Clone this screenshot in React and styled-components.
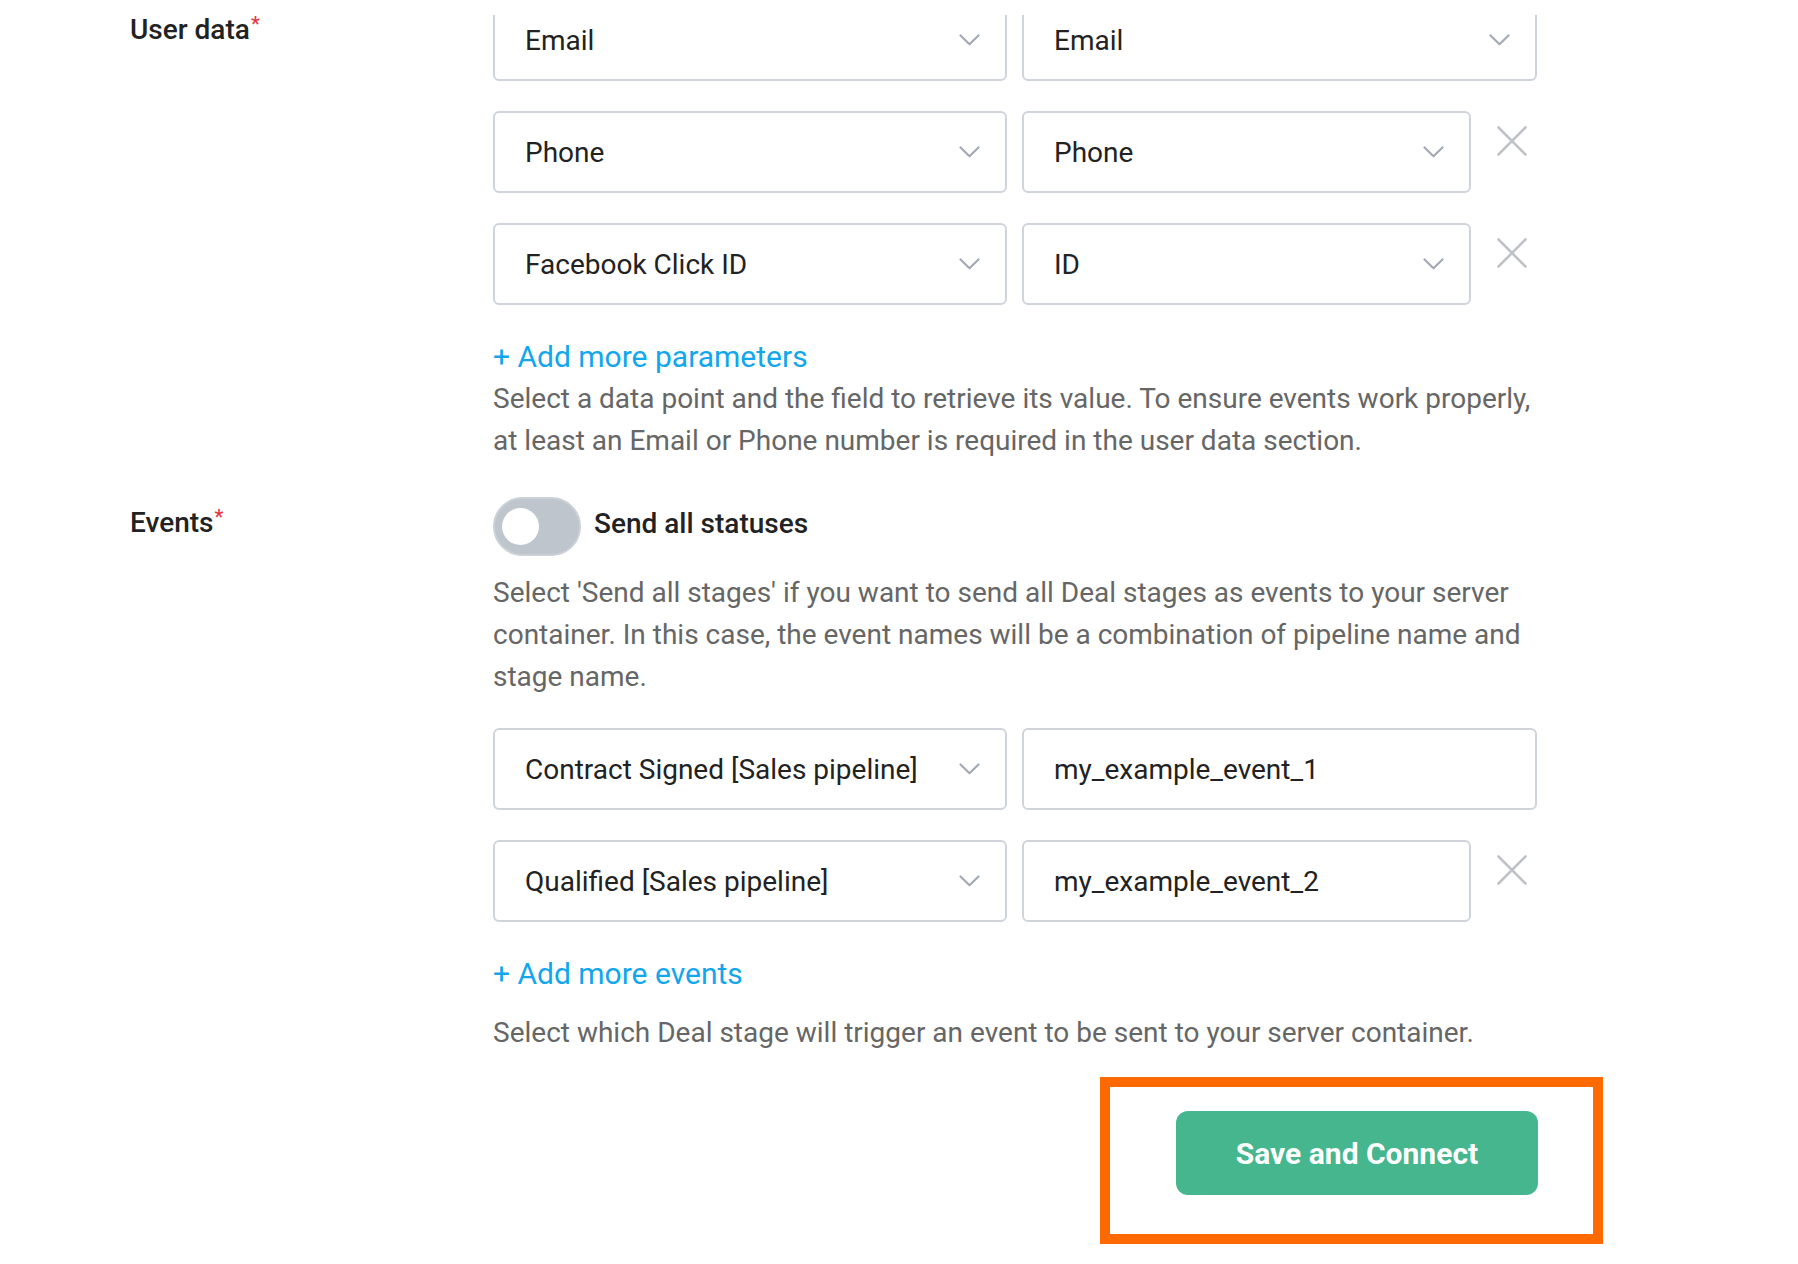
import React from "react";
import styled, { createGlobalStyle } from "styled-components";

const GlobalStyle = createGlobalStyle`
  html, body { margin: 0; padding: 0; background: #ffffff; }
  body { font-family: Roboto, "Liberation Sans", Arial, sans-serif; color: #222; }
  * { box-sizing: border-box; }
`;

const TopFade = styled.div`
  position: fixed;
  top: 0;
  left: 0;
  right: 0;
  height: 15px;
  background: #ffffff;
  z-index: 5;
`;

const Page = styled.div`
  width: 1798px;
  height: 1264px;
  overflow: hidden;
  padding-left: 130px;
  padding-top: 0;
  margin-top: -1px;
`;

const Section = styled.section`
  display: grid;
  grid-template-columns: 363px 1044px;
  margin-bottom: ${(p) => p.$mb || 0}px;
`;

const Label = styled.div`
  font-size: 28px;
  font-weight: 500;
  color: #222;
  line-height: 32px;
  padding-top: ${(p) => p.$pt}px;
`;

const Star = styled.sup`
  color: #e53946;
  font-size: 20px;
  vertical-align: top;
  position: relative;
  top: -6px;
  margin-left: 1px;
`;

const Controls = styled.div`
  display: flex;
  flex-direction: column;
`;

const Row = styled.div`
  display: flex;
  align-items: flex-start;
  gap: 15px;
  margin-bottom: 30px;
`;

const Field = styled.div`
  flex: ${(p) => (p.$first ? "0 0 514px" : "1 1 auto")};
  height: 82px;
  border: 2px solid #cfd4db;
  border-radius: 6px;
  background: #fff;
  display: flex;
  align-items: center;
  padding: 0 25px 0 30px;
  font-size: 28px;
  color: #222;
  min-width: 0;
`;

const FieldText = styled.span`
  flex: 1;
  white-space: nowrap;
  overflow: hidden;
`;

const RemoveBtn = styled.button`
  flex: 0 0 51px;
  height: 50px;
  margin-top: 5px;
  border: none;
  background: transparent;
  padding: 0;
  display: flex;
  align-items: center;
  justify-content: center;
  cursor: pointer;
`;

const AddLink = styled.a`
  font-size: 30px;
  line-height: 42px;
  color: #12a6ec;
  text-decoration: none;
  margin-top: 1px;
  align-self: flex-start;
  cursor: pointer;
`;

const Help = styled.p`
  margin: ${(p) => p.$mt || 0}px 0 0 0;
  font-size: 28px;
  line-height: 42px;
  color: #666;
`;

const ToggleRow = styled.div`
  display: flex;
  align-items: center;
  gap: 13px;
  margin-bottom: 16px;
`;

const Toggle = styled.div`
  width: 88px;
  height: 59px;
  border-radius: 30px;
  background: #bfc5cd;
  border: 2px solid #ccd1d8;
  display: flex;
  align-items: center;
  padding-left: 7px;
  flex: 0 0 auto;
`;

const Knob = styled.div`
  width: 37px;
  height: 37px;
  border-radius: 50%;
  background: #fff;
`;

const ToggleLabel = styled.span`
  font-size: 28px;
  font-weight: 500;
  color: #222;
  margin-bottom: 7px;
`;

const Spacer = styled.div`
  height: ${(p) => p.$h}px;
`;

const Footer = styled.div`
  display: flex;
  justify-content: flex-end;
  width: 1408px;
  margin-top: 57px;
`;

const Highlight = styled.div`
  position: relative;
`;

const HighlightFrame = styled.div`
  position: absolute;
  top: -34px;
  bottom: -49px;
  left: -76px;
  right: -65px;
  border: 10px solid #ff6a00;
  pointer-events: none;
`;

const PrimaryButton = styled.button`
  width: 362px;
  height: 84px;
  border: none;
  border-radius: 12px;
  background: #45b68e;
  color: #fff;
  font-family: Roboto, "Liberation Sans", Arial, sans-serif;
  font-size: 30px;
  font-weight: 700;
  cursor: pointer;
`;

const Chevron = () => (
  <svg width="21" height="12" viewBox="0 0 21 12" fill="none">
    <path d="M1.5 1.5 L10.5 10.2 L19.5 1.5" stroke="#a3aab3" strokeWidth="2.2" strokeLinecap="round" strokeLinejoin="round" />
  </svg>
);

const CloseIcon = () => (
  <svg width="30" height="30" viewBox="0 0 30 30" fill="none">
    <path d="M1.5 1.5 L28.5 28.5 M28.5 1.5 L1.5 28.5" stroke="#bfc3c8" strokeWidth="2.6" strokeLinecap="round" />
  </svg>
);

const SelectField = ({ first, children }) => (
  <Field $first={first}>
    <FieldText>{children}</FieldText>
    <Chevron />
  </Field>
);

const InputField = ({ children }) => (
  <Field>
    <FieldText>{children}</FieldText>
  </Field>
);

const userRows = [
  { a: "Email", b: "Email", removable: false },
  { a: "Phone", b: "Phone", removable: true },
  { a: "Facebook Click ID", b: "ID", removable: true },
];

const eventRows = [
  { a: "Contract Signed [Sales pipeline]", b: "my_example_event_1", removable: false },
  { a: "Qualified [Sales pipeline]", b: "my_example_event_2", removable: true },
];

export default function App() {
  return (
    <>
      <GlobalStyle />
      <TopFade />
      <Page>
        <Section $mb={35}>
          <Label $pt={15}>
            User data<Star>*</Star>
          </Label>
          <Controls>
            {userRows.map((r, i) => (
              <Row key={i}>
                <SelectField first>{r.a}</SelectField>
                <SelectField>{r.b}</SelectField>
                {r.removable && (
                  <RemoveBtn aria-label="Remove">
                    <CloseIcon />
                  </RemoveBtn>
                )}
              </Row>
            ))}
            <AddLink>+ Add more parameters</AddLink>
            <Help>
              Select a data point and the field to retrieve its value. To ensure events work properly,
              at least an Email or Phone number is required in the user data section.
            </Help>
          </Controls>
        </Section>
        <Section>
          <Label $pt={10}>
            Events<Star>*</Star>
          </Label>
          <Controls>
            <ToggleRow>
              <Toggle>
                <Knob />
              </Toggle>
              <ToggleLabel>Send all statuses</ToggleLabel>
            </ToggleRow>
            <Help>
              Select 'Send all stages' if you want to send all Deal stages as events to your server
              container. In this case, the event names will be a combination of pipeline name and
              stage name.
            </Help>
            <Spacer $h={30} />
            {eventRows.map((r, i) => (
              <Row key={i}>
                <SelectField first>{r.a}</SelectField>
                <InputField>{r.b}</InputField>
                {r.removable && (
                  <RemoveBtn aria-label="Remove">
                    <CloseIcon />
                  </RemoveBtn>
                )}
              </Row>
            ))}
            <AddLink>+ Add more events</AddLink>
            <Help $mt={17}>
              Select which Deal stage will trigger an event to be sent to your server container.
            </Help>
          </Controls>
        </Section>
        <Footer>
          <Highlight>
            <HighlightFrame />
            <PrimaryButton>Save and Connect</PrimaryButton>
          </Highlight>
        </Footer>
      </Page>
    </>
  );
}
